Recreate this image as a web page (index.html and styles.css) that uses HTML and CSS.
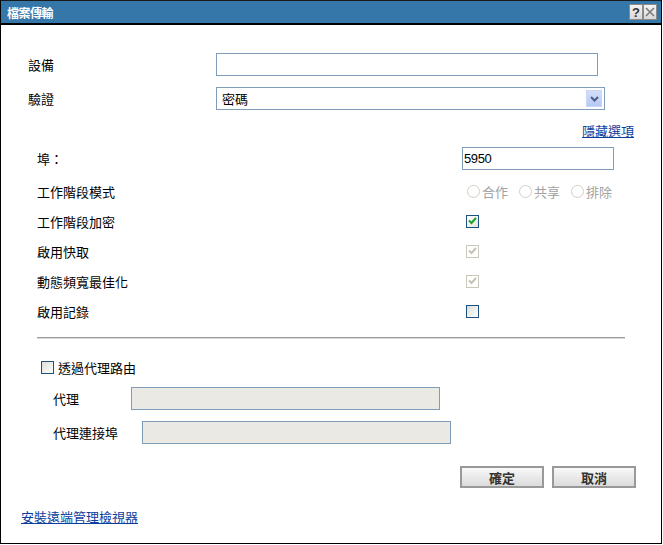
FILE: index.html
```html
<html>
  <head>
    <link rel="stylesheet" href="styles.css">
  </head>
  <body>
    <div class="dialog">
      <div class="titlebar">
        <span class="title">檔案傳輸</span>
        <div class="title-btns">
          <span class="tbtn">?</span>
          <span class="tbtn tbtn-x">
            <svg width="10" height="10" viewBox="0 0 10 10"><path d="M1 1 L9 9 M9 1 L1 9" stroke="#7a7a7a" stroke-width="1.6"/></svg>
          </span>
        </div>
      </div>

      <div class="row row-device">
        <span class="label label-top">設備</span>
        <div class="input input-device"></div>
      </div>
      <div class="row row-auth">
        <span class="label label-top">驗證</span>
        <div class="input select">
          <span>密碼</span>
          <span class="select-btn">
            <svg width="9" height="6" viewBox="0 0 9 6"><path d="M1 1 L4.5 4.5 L8 1" stroke="#4b5e86" stroke-width="2" fill="none"/></svg>
          </span>
        </div>
      </div>
      <div class="row row-link">
        <a class="link" href="#">隱藏選項</a>
      </div>

      <div class="row row-port">
        <span class="label label-opt">埠：</span>
        <div class="input input-port">5950</div>
      </div>
      <div class="row opt-row first">
        <span class="label label-opt">工作階段模式</span>
        <div class="radios">
          <span class="radio-item"><span class="radio"></span>合作</span>
          <span class="radio-item"><span class="radio"></span>共享</span>
          <span class="radio-item"><span class="radio"></span>排除</span>
        </div>
      </div>
      <div class="row opt-row">
        <span class="label label-opt">工作階段加密</span>
        <span class="check checked">
          <svg width="9" height="8" viewBox="0 0 9 8"><path d="M1 3.5 L3.5 6 L8 1" stroke="#21a121" stroke-width="2" fill="none"/></svg>
        </span>
      </div>
      <div class="row opt-row">
        <span class="label label-opt">啟用快取</span>
        <span class="check disabled">
          <svg width="9" height="8" viewBox="0 0 9 8"><path d="M1 3.5 L3.5 6 L8 1" stroke="#c4c2b6" stroke-width="2" fill="none"/></svg>
        </span>
      </div>
      <div class="row opt-row">
        <span class="label label-opt">動態頻寬最佳化</span>
        <span class="check disabled">
          <svg width="9" height="8" viewBox="0 0 9 8"><path d="M1 3.5 L3.5 6 L8 1" stroke="#c4c2b6" stroke-width="2" fill="none"/></svg>
        </span>
      </div>
      <div class="row opt-row">
        <span class="label label-opt">啟用記錄</span>
        <span class="check"></span>
      </div>

      <div class="divider"></div>

      <div class="row row-proxy-check">
        <span class="check"></span>
        <span>透過代理路由</span>
      </div>
      <div class="row row-proxy">
        <span class="label label-proxy">代理</span>
        <div class="input input-disabled input-proxy"></div>
      </div>
      <div class="row row-proxy-port">
        <span class="label label-proxy2">代理連接埠</span>
        <div class="input input-disabled input-proxy"></div>
      </div>

      <div class="row row-buttons">
        <span class="btn">確定</span>
        <span class="btn">取消</span>
      </div>

      <div class="row row-footer">
        <a class="link" href="#">安裝遠端管理檢視器</a>
      </div>
    </div>
  </body>
</html>
```

FILE: styles.css
```css
body { margin: 0; background: #fff; font-family: "Noto Sans CJK TC", "Liberation Sans", sans-serif; font-size: 13px; color: #000; }
.dialog { width: 662px; height: 544px; box-sizing: border-box; border: 1px solid #000; border-top: 1px solid #1a1a1a; }

.titlebar { height: 22px; background: #3677aa; border-bottom: 2px solid #000; display: flex; align-items: center; justify-content: space-between; padding: 0 4px 0 6px; }
.title { color: #fff; font-weight: bold; font-size: 12px; letter-spacing: -0.5px; }
.title-btns { display: flex; gap: 0; }
.tbtn { width: 12px; height: 14px; border: 1px solid #8a8a8a; background: linear-gradient(#f4f4f4, #d8d8d8); display: flex; align-items: center; justify-content: center; font-family: "Liberation Sans", sans-serif; font-weight: bold; font-size: 13px; color: #333; }

.row { display: flex; align-items: center; }
.label { flex: none; }
.label-top { width: 188px; margin-left: 27px; }
.label-opt { width: 425px; margin-left: 36px; }
.input { height: 23px; box-sizing: border-box; border: 1px solid #7f9db9; background: #fff; display: flex; align-items: center; padding-left: 5px; }

.row-device { margin-top: 28px; height: 23px; }
.input-device { width: 382px; }
.row-auth { margin-top: 11px; height: 23px; }
.select { width: 389px; justify-content: space-between; padding-right: 2px; }
.select-btn { width: 16px; height: 17px; box-sizing: border-box; border: 1px solid #c9d6f5; background: linear-gradient(#d3def9, #b6c9f4); display: flex; align-items: center; justify-content: center; }

.row-link { margin-top: 12px; height: 16px; justify-content: flex-end; padding-right: 27px; }
.link { color: #0b3d9c; text-decoration: underline; }

.row-port { margin-top: 9px; height: 23px; }
.input-port { width: 152px; padding-left: 1px; font-family: "Liberation Sans", sans-serif; font-size: 13px; letter-spacing: -0.4px; }

.opt-row { height: 20px; margin-top: 10px; }
.opt-row.first { margin-top: 11px; }
.radios { display: flex; margin-left: 5px; color: #a2a2a2; }
.radio-item { display: flex; align-items: center; margin-right: 11px; }
.radio { width: 11px; height: 11px; border: 1px solid #d2d0c6; border-radius: 50%; background: #fff; margin-right: 2px; }
.check { width: 11px; height: 11px; border: 1px solid #1c5180; background: linear-gradient(135deg, #dcdcd6, #ffffff); display: flex; align-items: center; justify-content: center; margin-left: 4px; flex: none; }
.check.checked { background: linear-gradient(135deg, #ffffff, #e4e4df); }
.check.disabled { border-color: #cac8bb; background: #fff; }

.divider { margin: 16px 0 0 36px; width: 588px; border-top: 1px solid #9a9a9a; border-bottom: 1px solid #dadada; }

.row-proxy-check { margin-top: 18px; height: 20px; margin-left: 36px; }
.row-proxy-check .check { margin-right: 4px; }
.row-proxy { margin-top: 10px; height: 23px; }
.label-proxy { width: 78px; margin-left: 52px; }
.label-proxy2 { width: 89px; margin-left: 52px; }
.input-disabled { background: #ebe9e3; }
.input-proxy { width: 309px; }
.row-proxy-port { margin-top: 11px; height: 23px; }

.row-buttons { margin-top: 22px; height: 22px; justify-content: flex-end; padding-right: 25px; gap: 8px; }
.btn { width: 84px; height: 22px; box-sizing: border-box; border: 2px solid #999; background: linear-gradient(#f8f8f8, #dcdcdc); display: flex; align-items: center; justify-content: center; font-weight: bold; color: #333; }

.row-footer { margin-top: 20px; height: 16px; padding-left: 20px; }
```
